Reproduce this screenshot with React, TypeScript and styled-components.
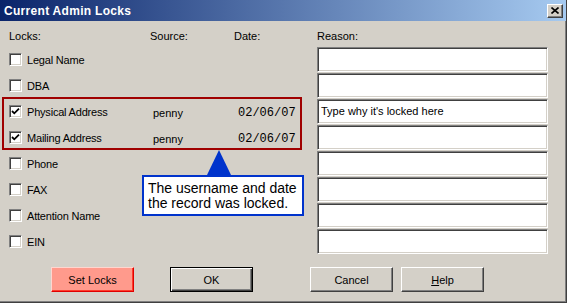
import React from 'react';
import styled, { createGlobalStyle } from 'styled-components';

const UI_FONT = "'Liberation Sans', Arial, sans-serif";

type Lock = {
  label: string;
  checked?: boolean;
  source?: string;
  date?: string;
  reason?: string;
};

const locks: Lock[] = [
  { label: 'Legal Name' },
  { label: 'DBA' },
  { label: 'Physical Address', checked: true, source: 'penny', date: '02/06/07', reason: "Type why it's locked here" },
  { label: 'Mailing Address', checked: true, source: 'penny', date: '02/06/07' },
  { label: 'Phone' },
  { label: 'FAX' },
  { label: 'Attention Name' },
  { label: 'EIN' },
];

function Checkbox({ checked }: { checked?: boolean }) {
  return (
    <CheckBox>
      {checked && (
        <svg width="9" height="9" viewBox="0 0 9 9">
          <polyline points="1,4 3.3,6.3 8,1.6" fill="none" stroke="#000" strokeWidth="1.8" />
        </svg>
      )}
    </CheckBox>
  );
}

export default function App() {
  return (
    <>
      <GlobalStyle />
      <Window>
        <TitleBar>
          <span>Current Admin Locks</span>
          <CloseButton>
            <svg width="8" height="7" viewBox="0 0 8 7">
              <path d="M0.5 0.5 L7.5 6.5 M7.5 0.5 L0.5 6.5" stroke="#000" strokeWidth="1.6" />
            </svg>
          </CloseButton>
        </TitleBar>
        <Body>
          <LockGrid>
            <Header>Locks:</Header>
            <Header>Source:</Header>
            <Header>Date:</Header>
            <Header>Reason:</Header>
            {locks.map((lock) => (
              <React.Fragment key={lock.label}>
                <LockCell>
                  <Checkbox checked={lock.checked} />
                  <span>{lock.label}</span>
                </LockCell>
                <SourceCell>{lock.source}</SourceCell>
                <DateCell>{lock.date}</DateCell>
                <ReasonField>{lock.reason}</ReasonField>
              </React.Fragment>
            ))}
          </LockGrid>
          <ButtonRow>
            <Button $variant="alert" $gap={42}>Set Locks</Button>
            <Button $variant="default" $gap={36}>OK</Button>
            <Button $gap={57}>Cancel</Button>
            <Button $gap={8}><u>H</u>elp</Button>
          </ButtonRow>
        </Body>
        <Highlight />
        <Callout>
          The username and date
          <br />
          the record was locked.
        </Callout>
      </Window>
    </>
  );
}

const GlobalStyle = createGlobalStyle`
  html, body {
    margin: 0;
    padding: 0;
    background: #d4d0c8;
  }
  #root {
    width: 567px;
    height: 303px;
    overflow: hidden;
  }
`;

const Window = styled.div`
  position: relative;
  box-sizing: border-box;
  width: 567px;
  height: 303px;
  display: flex;
  flex-direction: column;
  background: #d4d0c8;
  font-family: ${UI_FONT};
  font-size: 11px;
  color: #000;
  border-right: 1px solid #404040;
  border-bottom: 1px solid #404040;
  box-shadow: inset -1px -1px #808080;
`;

const TitleBar = styled.div`
  height: 21px;
  flex: none;
  display: flex;
  align-items: center;
  justify-content: space-between;
  padding: 0 3px 0 4px;
  background: linear-gradient(to right, #0a246a, #a6caf0);
  color: #fff;
  font: bold 12px ${UI_FONT};
  letter-spacing: 0.3px;
`;

const CloseButton = styled.div`
  box-sizing: border-box;
  width: 16px;
  height: 14px;
  display: flex;
  align-items: center;
  justify-content: center;
  background: #d4d0c8;
  border: 1px solid;
  border-color: #fff #404040 #404040 #fff;
  box-shadow: inset -1px -1px #808080;
`;

const Body = styled.div`
  padding: 9px 0 0 9px;
  display: flex;
  flex-direction: column;
`;

const LockGrid = styled.div`
  display: grid;
  grid-template-columns: 141px 84px 83px 231px;
  grid-template-rows: 16px repeat(8, 25px);
  row-gap: 1px;
`;

const Header = styled.div`
  line-height: 13px;
  align-self: start;
`;

const LockCell = styled.div`
  display: flex;
  align-items: center;
  gap: 5px;
  letter-spacing: -0.2px;
`;

const CheckBox = styled.div`
  box-sizing: border-box;
  width: 13px;
  height: 13px;
  display: flex;
  align-items: center;
  justify-content: center;
  background: #fff;
  border: 1px solid;
  border-color: #808080 #fff #fff #808080;
  box-shadow: inset 1px 1px #404040, inset -1px -1px #d4d0c8;
`;

const SourceCell = styled.div`
  display: flex;
  align-items: center;
  padding: 3px 0 0 3px;
`;

const DateCell = styled.div`
  display: flex;
  align-items: center;
  padding: 3px 0 0 4px;
  font-family: 'Liberation Mono', 'Courier New', monospace;
  font-size: 12px;
`;

const ReasonField = styled.div`
  box-sizing: border-box;
  display: flex;
  align-items: center;
  padding: 0 0 1px 3px;
  background: #fff;
  border: 1px solid;
  border-color: #808080 #fff #fff #808080;
  box-shadow: inset 1px 1px #404040, inset -1px -1px #d4d0c8;
`;

const ButtonRow = styled.div`
  display: flex;
  margin-top: 13px;
`;

const Button = styled.button<{ $variant?: 'default' | 'alert'; $gap: number }>`
  box-sizing: border-box;
  width: 83px;
  height: 25px;
  margin-left: ${(p) => p.$gap}px;
  padding: 0;
  font-family: ${UI_FONT};
  font-size: 11px;
  color: #000;
  background: ${(p) => (p.$variant === 'alert' ? '#ff9a8c' : '#d4d0c8')};
  border: 1px solid;
  border-color: ${(p) =>
    p.$variant === 'default'
      ? '#000'
      : p.$variant === 'alert'
        ? '#ffd6cf #e00000 #e00000 #ffd6cf'
        : '#fff #404040 #404040 #fff'};
  box-shadow: ${(p) =>
    p.$variant === 'default'
      ? 'inset 1px 1px #fff, inset -1px -1px #404040, inset -2px -2px #808080'
      : p.$variant === 'alert'
        ? 'inset -1px -1px #ff3b2b'
        : 'inset -1px -1px #808080'};
`;

const Highlight = styled.div`
  position: absolute;
  left: 2px;
  top: 97px;
  width: 300px;
  height: 53px;
  box-sizing: border-box;
  border: 2px solid #a00000;
  pointer-events: none;
`;

const Callout = styled.div`
  position: absolute;
  left: 142px;
  top: 175px;
  width: 162px;
  height: 41px;
  box-sizing: border-box;
  padding: 4px 0 0 4px;
  background: #fff;
  border: 2px solid #0033cc;
  font: 14px/15px ${UI_FONT};
  white-space: nowrap;

  &::before {
    content: '';
    position: absolute;
    left: 63px;
    top: -27px;
    border-left: 12px solid transparent;
    border-right: 12px solid transparent;
    border-bottom: 25px solid #0033cc;
  }
`;
